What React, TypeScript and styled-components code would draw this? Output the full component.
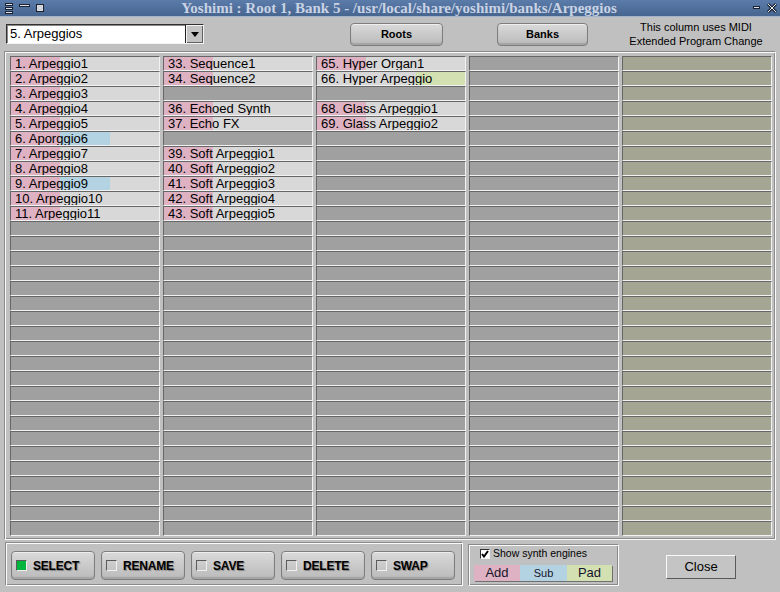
import React from 'react';
import styled, { createGlobalStyle } from 'styled-components';

const Global = createGlobalStyle`
  html, body { margin: 0; padding: 0; background: #c0c0c0; }
  body { width: 780px; height: 592px; overflow: hidden; font-family: "Liberation Sans", Arial, sans-serif; }
`;

const ADD = '#deb2c2';
const SUB = '#b3d3e3';
const PAD = '#d3e1b2';
const BASE = '#d8d8d8';

const Window = styled.div`
  width: 780px;
  height: 592px;
  display: flex;
  flex-direction: column;
  background: #c0c0c0;
  box-sizing: border-box;
`;

const TitleBar = styled.div`
  height: 16px;
  flex: none;
  display: flex;
  align-items: center;
  background: linear-gradient(#5b7baa, #46658f);
  border-bottom: 1px solid #a2b2cc;
`;

const TitleText = styled.div`
  flex: 1;
  text-align: center;
  font-family: "Liberation Serif", "Times New Roman", serif;
  font-weight: bold;
  font-size: 15px;
  line-height: 16px;
  color: #c9d3e4;
  white-space: nowrap;
`;

const TopRow = styled.div`
  height: 34px;
  flex: none;
  display: flex;
  align-items: center;
  padding-left: 6px;
`;

const Choice = styled.div`
  width: 198px;
  height: 20px;
  box-sizing: border-box;
  display: flex;
  align-items: center;
  background: #fff;
  border-style: solid;
  border-width: 1px;
  border-color: #303030 #f4f4f4 #f4f4f4 #303030;
  box-shadow: inset 1px 1px 0 #8a8a8a;
`;

const ChoiceText = styled.div`
  flex: 1;
  padding-left: 3px;
  font-size: 13px;
  line-height: 18px;
  color: #000;
`;

const ChoiceArrow = styled.div`
  width: 18px;
  height: 18px;
  box-sizing: border-box;
  display: flex;
  align-items: center;
  justify-content: center;
  background: #c4c4c4;
  border-left: 1px solid #202020;
  box-shadow: inset 1px 1px 0 #f4f4f4, inset -1px -1px 0 #606060;
`;

const PlasticButton = styled.div<{ $w: number; $h: number; $ml?: number }>`
  width: ${p => p.$w}px;
  height: ${p => p.$h}px;
  margin-left: ${p => p.$ml ?? 0}px;
  flex: none;
  box-sizing: border-box;
  border: 1px solid #7e7e7e;
  border-radius: 4px;
  background: linear-gradient(#dadada, #c8c8c8 55%, #bababa);
  box-shadow: inset 0 1px 0 #eeeeee, inset 0 -2px 1px #a4a4a4;
  display: flex;
  align-items: center;
`;

const TopButtonLabel = styled.span`
  flex: 1;
  text-align: center;
  font-weight: bold;
  font-size: 11px;
  color: #000;
`;

const Note = styled.div`
  width: 160px;
  margin-left: 28px;
  text-align: center;
  font-size: 11px;
  line-height: 14px;
  color: #000;
`;

const GridFrame = styled.div`
  margin-left: 4px;
  width: 772px;
  height: 489px;
  flex: none;
  box-sizing: border-box;
  border-style: solid;
  border-width: 1px;
  border-color: #8a8a8a #fafafa #fafafa #8a8a8a;
  box-shadow: inset 1px 1px 0 #fafafa, inset -1px -1px 0 #8a8a8a;
  padding: 4px 3px 3px 5px;
`;

const Grid = styled.div`
  display: grid;
  grid-template-columns: repeat(5, 150px);
  grid-template-rows: repeat(32, 15px);
  grid-auto-flow: column;
  column-gap: 3px;
`;

type Kind = 'filled' | 'empty' | 'ext';

const cellBg = (p: { $kind: Kind; $add?: boolean; $sub?: boolean; $pad?: boolean }) => {
  if (p.$kind === 'empty') return '#a0a0a0';
  if (p.$kind === 'ext') return '#a5a594';
  const a = p.$add ? ADD : BASE;
  const s = p.$sub ? SUB : BASE;
  const d = p.$pad ? PAD : BASE;
  return `linear-gradient(to right, ${a} 0 33.33%, ${s} 33.33% 66.67%, ${d} 66.67% 100%)`;
};

const Cell = styled.div<{ $kind: Kind; $add?: boolean; $sub?: boolean; $pad?: boolean }>`
  box-sizing: border-box;
  height: 15px;
  border-style: solid;
  border-width: 1px;
  border-color: #666666 #f2f2f2 #f2f2f2 #666666;
  background: ${p => cellBg(p)};
  font-size: 13px;
  line-height: 13px;
  padding-left: 4px;
  white-space: nowrap;
  overflow: hidden;
  color: #000;
`;

const BottomRow = styled.div`
  flex: 1;
  display: flex;
  align-items: flex-start;
`;

const Engraved = styled.div<{ $w: number; $h: number; $ml: number; $mt: number }>`
  width: ${p => p.$w}px;
  height: ${p => p.$h}px;
  margin-left: ${p => p.$ml}px;
  margin-top: ${p => p.$mt}px;
  flex: none;
  box-sizing: border-box;
  border-style: solid;
  border-width: 1px;
  border-color: #8a8a8a #fafafa #fafafa #8a8a8a;
  box-shadow: inset 1px 1px 0 #fafafa, inset -1px -1px 0 #8a8a8a;
`;

const ButtonsBox = styled(Engraved)`
  display: flex;
  gap: 6px;
  padding: 8px 0 0 5px;
`;

const Light = styled.span<{ $on?: boolean }>`
  width: 11px;
  height: 11px;
  margin-left: 4px;
  margin-right: 6px;
  flex: none;
  box-sizing: border-box;
  border-style: solid;
  border-width: 1px;
  border-color: #5a5a5a #f0f0f0 #f0f0f0 #5a5a5a;
  background: ${p => (p.$on ? '#00b43e' : 'transparent')};
`;

const ActionLabel = styled.span`
  font-weight: bold;
  font-size: 12px;
  color: #000;
  text-shadow: 1px 1px 1px #808080;
  letter-spacing: -0.2px;
`;

const SynthBox = styled(Engraved)`
  display: flex;
  flex-direction: column;
  padding: 3px 0 0 5px;
`;

const CheckRow = styled.div`
  display: flex;
  align-items: center;
  gap: 3px;
  padding-left: 6px;
  height: 11px;
`;

const CheckBox = styled.span`
  width: 10px;
  height: 10px;
  box-sizing: border-box;
  background: #fff;
  border-style: solid;
  border-width: 1px;
  border-color: #303030 #f4f4f4 #f4f4f4 #303030;
  display: flex;
  align-items: center;
  justify-content: center;
`;

const CheckLabel = styled.span`
  font-size: 10.5px;
  line-height: 11px;
  color: #000;
`;

const Legend = styled.div`
  display: flex;
  margin-top: 6px;
  height: 16px;
  width: 138px;
  box-shadow: 1px 1px 0 #707070;
`;

const LegendItem = styled.div<{ $bg: string; $w: number; $fs: number }>`
  width: ${p => p.$w}px;
  background: ${p => p.$bg};
  font-size: ${p => p.$fs}px;
  line-height: 16px;
  text-align: center;
  color: #14142a;
`;

const CloseButton = styled.div`
  width: 70px;
  height: 24px;
  margin-left: 47px;
  margin-top: 15px;
  box-sizing: border-box;
  border-style: solid;
  border-width: 1px;
  border-color: #f8f8f8 #5a5a5a #5a5a5a #f8f8f8;
  background: #c4c4c4;
  font-size: 13px;
  line-height: 22px;
  text-align: center;
  color: #000;
`;

type Entry = { label?: string; add?: boolean; sub?: boolean; pad?: boolean };

const col1: Entry[] = [
  { label: '1. Arpeggio1', add: true },
  { label: '2. Arpeggio2', add: true },
  { label: '3. Arpeggio3', add: true },
  { label: '4. Arpeggio4', add: true },
  { label: '5. Arpeggio5', add: true },
  { label: '6. Aporggio6', add: true, sub: true },
  { label: '7. Arpeggio7', add: true },
  { label: '8. Arpeggio8', add: true },
  { label: '9. Arpeggio9', add: true, sub: true },
  { label: '10. Arpeggio10', add: true },
  { label: '11. Arpeggio11', add: true },
];
const col2: Entry[] = [
  { label: '33. Sequence1', add: true },
  { label: '34. Sequence2', add: true },
  {},
  { label: '36. Echoed Synth', add: true },
  { label: '37. Echo FX', add: true },
  {},
  { label: '39. Soft Arpeggio1', add: true },
  { label: '40. Soft Arpeggio2', add: true },
  { label: '41. Soft Arpeggio3', add: true },
  { label: '42. Soft Arpeggio4', add: true },
  { label: '43. Soft Arpeggio5', add: true },
];
const col3: Entry[] = [
  { label: '65. Hyper Organ1', add: true },
  { label: '66. Hyper Arpeggio', pad: true },
  {},
  { label: '68. Glass Arpeggio1', add: true },
  { label: '69. Glass Arpeggio2', add: true },
];

const ROWS = 32;
const buildColumn = (entries: Entry[], ext = false) =>
  Array.from({ length: ROWS }, (_, i) => {
    const e = entries[i];
    if (e && e.label) return { kind: 'filled' as Kind, ...e };
    return { kind: (ext ? 'ext' : 'empty') as Kind };
  });

const columns = [buildColumn(col1), buildColumn(col2), buildColumn(col3), buildColumn([]), buildColumn([], true)];

const LeftIcons = () => (
  <svg width="50" height="16" viewBox="0 0 50 16">
    {[3.5, 7.5, 11.5].map(y => (
      <rect key={y} x="5.5" y={y} width="7" height="2" fill="#dde2ea" stroke="#1c2433" strokeWidth="1" />
    ))}
    <rect x="19.5" y="4.5" width="10" height="2" fill="#dde2ea" stroke="#1c2433" strokeWidth="1" />
    <rect x="36.5" y="4.5" width="7" height="7" fill="#d4d8de" stroke="#1c2433" strokeWidth="1" />
  </svg>
);

const RightIcons = () => (
  <svg width="32" height="16" viewBox="0 0 32 16">
    <rect x="5.5" y="6.5" width="6" height="2" fill="#dde2ea" stroke="#1c2433" strokeWidth="1" />
    <path d="M20 4 L28 12 M28 4 L20 12" stroke="#1c2433" strokeWidth="3" />
    <path d="M20 4 L28 12 M28 4 L20 12" stroke="#eef0f4" strokeWidth="1" />
  </svg>
);

const actions = ['SELECT', 'RENAME', 'SAVE', 'DELETE', 'SWAP'];

export default function App() {
  return (
    <>
      <Global />
      <Window>
        <TitleBar>
          <LeftIcons />
          <TitleText>Yoshimi : Root 1, Bank 5 - /usr/local/share/yoshimi/banks/Arpeggios</TitleText>
          <RightIcons />
        </TitleBar>
        <TopRow>
          <Choice>
            <ChoiceText>5. Arpeggios</ChoiceText>
            <ChoiceArrow>
              <svg width="8" height="5" viewBox="0 0 8 5">
                <path d="M0 0 H8 L4 5 Z" fill="#000" />
              </svg>
            </ChoiceArrow>
          </Choice>
          <PlasticButton $w={93} $h={23} $ml={146}>
            <TopButtonLabel>Roots</TopButtonLabel>
          </PlasticButton>
          <PlasticButton $w={91} $h={23} $ml={54}>
            <TopButtonLabel>Banks</TopButtonLabel>
          </PlasticButton>
          <Note>
            This column uses MIDI
            <br />
            Extended Program Change
          </Note>
        </TopRow>
        <GridFrame>
          <Grid>
            {columns.map((col, ci) =>
              col.map((c, ri) => (
                <Cell
                  key={`${ci}-${ri}`}
                  $kind={c.kind}
                  $add={'add' in c ? c.add : false}
                  $sub={'sub' in c ? c.sub : false}
                  $pad={'pad' in c ? c.pad : false}
                >
                  {'label' in c ? c.label : null}
                </Cell>
              ))
            )}
          </Grid>
        </GridFrame>
        <BottomRow>
          <ButtonsBox $w={458} $h={44} $ml={5} $mt={2}>
            {actions.map((a, i) => (
              <PlasticButton key={a} $w={84} $h={29}>
                <Light $on={i === 0} />
                <ActionLabel>{a}</ActionLabel>
              </PlasticButton>
            ))}
          </ButtonsBox>
          <SynthBox $w={151} $h={42} $ml={5} $mt={4}>
            <CheckRow>
              <CheckBox>
                <svg width="8" height="8" viewBox="0 0 8 8">
                  <path d="M1 4 L3 6.5 L7 1" stroke="#000" strokeWidth="2" fill="none" />
                </svg>
              </CheckBox>
              <CheckLabel>Show synth engines</CheckLabel>
            </CheckRow>
            <Legend>
              <LegendItem $bg={ADD} $w={46} $fs={13}>Add</LegendItem>
              <LegendItem $bg={SUB} $w={47} $fs={11}>Sub</LegendItem>
              <LegendItem $bg={PAD} $w={45} $fs={13}>Pad</LegendItem>
            </Legend>
          </SynthBox>
          <CloseButton>Close</CloseButton>
        </BottomRow>
      </Window>
    </>
  );
}
